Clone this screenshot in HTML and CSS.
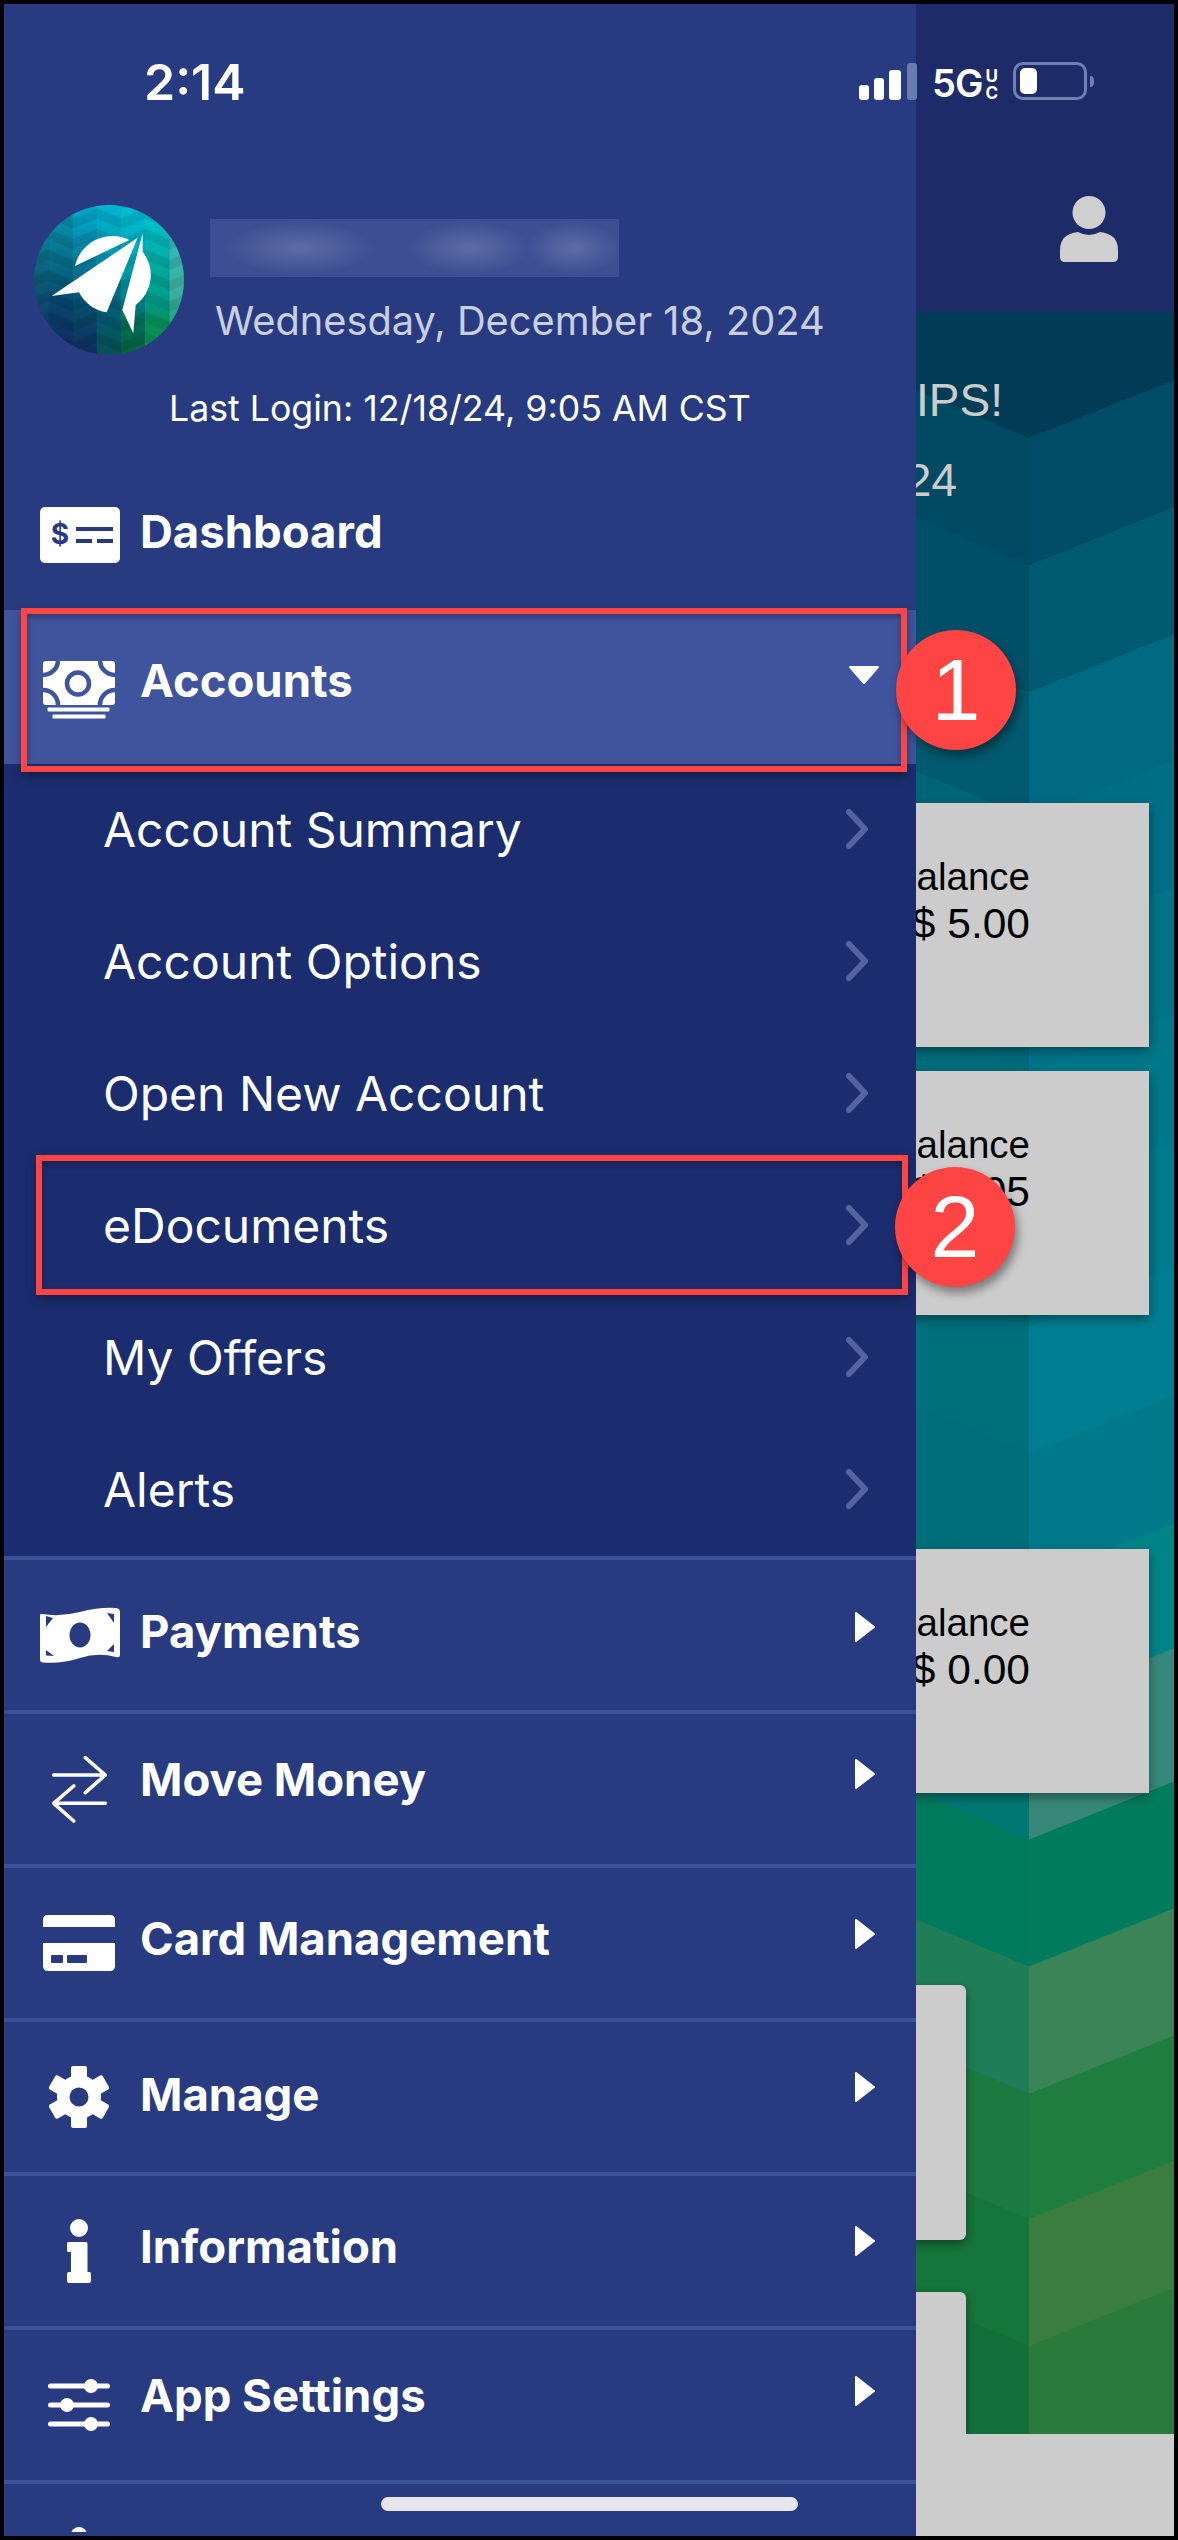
FILE: index.html
```html
<!DOCTYPE html>
<html lang="en">
<head>
<meta charset="utf-8">
<title>Accounts menu</title>
<link rel="stylesheet" href="styles.css">
</head>
<body>
<svg class="defs" width="0" height="0" aria-hidden="true">
  <symbol id="chev" viewBox="0 0 24 42"><polyline points="4,4 20,21 4,38" fill="none" stroke="#53649f" stroke-width="6" stroke-linecap="round" stroke-linejoin="round"/></symbol>
  <symbol id="tri" viewBox="0 0 20 30"><polygon points="1,1 19,15 1,29" fill="#fff" stroke="#fff" stroke-width="2" stroke-linejoin="round"/></symbol>
</svg>
<div class="phone">

  <div class="main">
    <header class="topbar">
      <svg class="user" viewBox="0 0 58 66"><ellipse cx="29" cy="16.500" rx="16.500" ry="16.500" fill="#cfcfcf"/><path d="M18 36 Q29 42 40 36 Q58 38 58 54 V61 Q58 66 53 66 H5 Q0 66 0 61 V54 Q0 38 18 36Z" fill="#cfcfcf"/></svg>
    </header>
    <section class="content">
      <svg class="bands" viewBox="4 312 1170 2120" preserveAspectRatio="none">
        <rect x="4" y="312" width="1170" height="2120" fill="#013c56"/>
        <g>
          <polygon fill="#004a64" points="900,384 1029,438 1029,2540 900,2540"/>
          <polygon fill="#004f69" points="900,511 1029,565 1029,2540 900,2540"/>
          <polygon fill="#005a70" points="900,638 1029,692 1029,2540 900,2540"/>
          <polygon fill="#006478" points="900,764 1029,818 1029,2540 900,2540"/>
          <polygon fill="#006a7a" points="900,891 1029,945 1029,2540 900,2540"/>
          <polygon fill="#006c7a" points="900,1018 1029,1072 1029,2540 900,2540"/>
          <polygon fill="#006e7b" points="900,1144 1029,1198 1029,2540 900,2540"/>
          <polygon fill="#00707d" points="900,1271 1029,1325 1029,2540 900,2540"/>
          <polygon fill="#006f7b" points="900,1398 1029,1452 1029,2540 900,2540"/>
          <polygon fill="#006f78" points="900,1524 1029,1578 1029,2540 900,2540"/>
          <polygon fill="#007872" points="900,1651 1029,1705 1029,2540 900,2540"/>
          <polygon fill="#007a5c" points="900,1784 1029,1838 1029,2540 900,2540"/>
          <polygon fill="#1f7d58" points="900,1911 1029,1965 1029,2540 900,2540"/>
          <polygon fill="#1c7a40" points="900,2038 1029,2092 1029,2540 900,2540"/>
          <polygon fill="#15753a" points="900,2163 1029,2217 1029,2540 900,2540"/>
          <polygon fill="#14703a" points="900,2290 1029,2344 1029,2540 900,2540"/>
        </g>
        <g>
          <polygon fill="#004b65" points="1029,438 1174,380 1174,2540 1029,2540"/>
          <polygon fill="#005a72" points="1029,565 1174,507 1174,2540 1029,2540"/>
          <polygon fill="#006a82" points="1029,692 1174,634 1174,2540 1029,2540"/>
          <polygon fill="#006f86" points="1029,818 1174,760 1174,2540 1029,2540"/>
          <polygon fill="#007388" points="1029,945 1174,887 1174,2540 1029,2540"/>
          <polygon fill="#00778a" points="1029,1072 1174,1014 1174,2540 1029,2540"/>
          <polygon fill="#007a8d" points="1029,1198 1174,1140 1174,2540 1029,2540"/>
          <polygon fill="#007e91" points="1029,1325 1174,1267 1174,2540 1029,2540"/>
          <polygon fill="#007a8a" points="1029,1452 1174,1394 1174,2540 1029,2540"/>
          <polygon fill="#008487" points="1029,1580 1174,1522 1174,2540 1029,2540"/>
          <polygon fill="#37887a" points="1029,1705 1174,1647 1174,2540 1029,2540"/>
          <polygon fill="#007c5c" points="1029,1838 1174,1780 1174,2540 1029,2540"/>
          <polygon fill="#3a8458" points="1029,1965 1174,1907 1174,2540 1029,2540"/>
          <polygon fill="#1f7d3f" points="1029,2092 1174,2034 1174,2540 1029,2540"/>
          <polygon fill="#3a7d3e" points="1029,2217 1174,2159 1174,2540 1029,2540"/>
          <polygon fill="#2a7a3c" points="1029,2344 1174,2286 1174,2540 1029,2540"/>
        </g>
      </svg>
      <div class="banner">
        <div class="banner-title">TIPS!</div>
        <div class="banner-date">2024</div>
      </div>
      <div class="card card-first"><div>Balance</div><div class="amount">$ 5.00</div></div>
      <div class="card card-second"><div>Balance</div><div class="amount">$ 0.05</div></div>
      <div class="card card-third"><div>Balance</div><div class="amount">$ 0.00</div></div>
      <div class="tile tile-first"></div>
      <div class="tile tile-second"></div>
    </section>
    <footer class="footer"></footer>
  </div>

  <aside class="drawer">
    <div class="profile">
      <div class="profile-row">
        <svg class="logo" viewBox="0 0 450 450">
          <defs>
            <clipPath id="logoClip"><circle cx="225" cy="225" r="225"/></clipPath>
            <linearGradient id="lc0" x1="0" y1="0" x2="0" y2="1"><stop offset="0.2" stop-color="#0a7d92"/><stop offset="0.5" stop-color="#0a5a76"/><stop offset="0.8" stop-color="#0c3f6a"/></linearGradient>
            <linearGradient id="lc1" x1="0" y1="0" x2="0" y2="1"><stop offset="0.1" stop-color="#0a8ea8"/><stop offset="0.4" stop-color="#066a86"/><stop offset="0.65" stop-color="#06466e"/><stop offset="0.9" stop-color="#0f2f60"/></linearGradient>
            <linearGradient id="lc2" x1="0" y1="0" x2="0" y2="1"><stop offset="0.05" stop-color="#02a6cb"/><stop offset="0.35" stop-color="#077f9c"/><stop offset="0.65" stop-color="#06506f"/><stop offset="1" stop-color="#0f2c5e"/></linearGradient>
            <linearGradient id="lc3" x1="0" y1="0" x2="0" y2="1"><stop offset="0" stop-color="#00b6d4"/><stop offset="0.35" stop-color="#0295ae"/><stop offset="0.65" stop-color="#045f7a"/><stop offset="1" stop-color="#064f55"/></linearGradient>
            <linearGradient id="lc4" x1="0" y1="0" x2="0" y2="1"><stop offset="0" stop-color="#00bdd6"/><stop offset="0.35" stop-color="#00a7b5"/><stop offset="0.62" stop-color="#067f8e"/><stop offset="0.8" stop-color="#056b55"/><stop offset="1" stop-color="#05633f"/></linearGradient>
            <linearGradient id="lc5" x1="0" y1="0" x2="0" y2="1"><stop offset="0.1" stop-color="#00c0cc"/><stop offset="0.4" stop-color="#00ab9f"/><stop offset="0.65" stop-color="#009a88"/><stop offset="0.8" stop-color="#078f55"/></linearGradient>
            <linearGradient id="lc6" x1="0" y1="0" x2="0" y2="1"><stop offset="0.25" stop-color="#30b8b8"/><stop offset="0.55" stop-color="#3cb3a0"/><stop offset="0.8" stop-color="#1ca482"/></linearGradient>
            <pattern id="logoChev" x="43" y="10" width="146" height="62" patternUnits="userSpaceOnUse">
              <polygon points="0,0 73,30 146,0 146,31 73,61 0,31" fill="#000" fill-opacity="0.09"/>
            </pattern>
          </defs>
          <g clip-path="url(#logoClip)">
            <rect x="0" width="44" height="450" fill="url(#lc0)"/>
            <rect x="43" width="74" height="450" fill="url(#lc1)"/>
            <rect x="116" width="73" height="450" fill="url(#lc2)"/>
            <rect x="188" width="73" height="450" fill="url(#lc3)"/>
            <rect x="260" width="74" height="450" fill="url(#lc4)"/>
            <rect x="333" width="74" height="450" fill="url(#lc5)"/>
            <rect x="406" width="44" height="450" fill="url(#lc6)"/>
            <rect width="450" height="450" fill="url(#logoChev)"/>
            <path d="M123 183 A115 115 0 0 1 286 105 Z" fill="#fff"/>
            <path d="M311 98 L53 273 L135 262 A112 112 0 0 0 218 322 Z" fill="#fff"/>
            <path d="M326 85 L265 315 L298 385 L305 300 A112 112 0 0 0 326 140 Z" fill="#fff"/>
          </g>
        </svg>
        <div class="profile-text">
          <div class="blurred-name"></div>
          <div class="date">Wednesday, December 18, 2024</div>
        </div>
      </div>
      <div class="last-login">Last Login: 12/18/24, 9:05 AM CST</div>
    </div>

    <nav class="menu">
      <div class="row row-plain">
        <div class="icon-col">
          <svg class="ico ico-wide" width="80" height="56" viewBox="0 0 80 56">
            <rect width="80" height="56" rx="5" fill="#fff"/>
            <text x="20" y="37" text-anchor="middle" class="ico-dollar">$</text>
            <rect x="36" y="20" width="37" height="4" fill="#283b80"/>
            <rect x="36" y="32" width="16" height="4" fill="#283b80"/>
            <rect x="57" y="32" width="16" height="4" fill="#283b80"/>
          </svg>
        </div>
        <div class="row-main lift-2"><span class="label">Dashboard</span></div>
      </div>

      <div class="row row-open">
        <div class="icon-col icon-low">
          <svg class="ico" width="72" height="58" viewBox="0 0 72 58">
            <rect width="72" height="44" rx="3" fill="#fff"/>
            <g fill="none" stroke="#3f549c" stroke-width="4.500">
              <circle cx="35" cy="22.500" r="11"/>
              <path d="M0 14 A15 15 0 0 0 15 0"/>
              <path d="M72 14 A15 15 0 0 1 57 0"/>
              <path d="M0 29 A15 15 0 0 1 15 44"/>
              <path d="M72 29 A15 15 0 0 0 57 44"/>
            </g>
            <rect x="4.500" y="46.500" width="62" height="4" rx="1" fill="#fff"/>
            <rect x="9.500" y="53.500" width="53" height="4" rx="1" fill="#fff"/>
          </svg>
        </div>
        <div class="row-main lift-7">
          <span class="label nudge-4">Accounts</span>
          <svg class="arrow-down" width="32" height="20" viewBox="0 0 32 20"><polygon points="2,2 30,2 16,18" fill="#fff" stroke="#fff" stroke-width="2" stroke-linejoin="round"/></svg>
        </div>
      </div>

      <div class="submenu">
        <div class="sub-row"><span>Account Summary</span><svg class="chev"><use href="#chev"/></svg></div>
        <div class="sub-row"><span>Account Options</span><svg class="chev"><use href="#chev"/></svg></div>
        <div class="sub-row"><span>Open New Account</span><svg class="chev"><use href="#chev"/></svg></div>
        <div class="sub-row"><span>eDocuments</span><svg class="chev"><use href="#chev"/></svg></div>
        <div class="sub-row"><span>My Offers</span><svg class="chev"><use href="#chev"/></svg></div>
        <div class="sub-row"><span>Alerts</span><svg class="chev"><use href="#chev"/></svg></div>
      </div>

      <div class="row row-line">
        <div class="icon-col">
          <svg class="ico ico-wide" width="80" height="56" viewBox="0 0 80 56">
            <path d="M2 7 Q20 10 40 5 T75 1 Q80 1 80 5 V48 Q80 51 76 50 Q58 45 40 51 T3 55.500 Q0 55.500 0 52 V9 Q0 6 2 7Z" fill="#fff"/>
            <ellipse cx="40" cy="28" rx="10.500" ry="12.500" fill="#283b80"/>
            <polygon points="6,9 13,11 6,20" fill="#283b80"/>
            <polygon points="67,6 74,7 74,16" fill="#283b80"/>
            <polygon points="6,43 14,49 6,48.500" fill="#283b80"/>
            <polygon points="74,37 74,45 67,44" fill="#283b80"/>
          </svg>
        </div>
        <div class="row-main lift-2"><span class="label">Payments</span><svg class="tri"><use href="#tri"/></svg></div>
      </div>

      <div class="row row-line">
        <div class="icon-col">
          <svg class="ico" width="55" height="67" viewBox="0 0 55 67">
            <path d="M1.700 19 H53.300 M33.300 1.700 L53.300 19 L33.300 36.700 M1.700 47.300 H53.300 M21.700 30 L1.700 47.300 L21.700 65" fill="none" stroke="#fff" stroke-width="3.600" stroke-linecap="round" stroke-linejoin="round"/>
          </svg>
        </div>
        <div class="row-main lift-9"><span class="label nudge-3">Move Money</span><svg class="tri"><use href="#tri"/></svg></div>
      </div>

      <div class="row row-line">
        <div class="icon-col">
          <svg class="ico" width="72" height="56" viewBox="0 0 72 56">
            <path d="M0 12 V5 Q0 0 5 0 H67 Q72 0 72 5 V12Z" fill="#fff"/>
            <path d="M0 28 H72 V51 Q72 56 67 56 H5 Q0 56 0 51Z" fill="#fff"/>
            <rect x="8" y="40" width="12" height="8" rx="1" fill="#283b80"/>
            <rect x="24" y="40" width="20" height="8" rx="1" fill="#283b80"/>
          </svg>
        </div>
        <div class="row-main lift-3"><span class="label">Card Management</span><svg class="tri"><use href="#tri"/></svg></div>
      </div>

      <div class="row row-line">
        <div class="icon-col">
          <svg class="ico" width="60" height="62" viewBox="0 0 60 62">
            <g fill="#fff">
              <circle cx="30" cy="31" r="22"/>
              <rect x="22" y="0" width="16" height="62" rx="2"/>
              <rect x="22" y="0" width="16" height="62" rx="2" transform="rotate(60 30 31)"/>
              <rect x="22" y="0" width="16" height="62" rx="2" transform="rotate(120 30 31)"/>
            </g>
            <circle cx="30" cy="31" r="9.500" fill="#283b80"/>
          </svg>
        </div>
        <div class="row-main lift-4"><span class="label nudge-6">Manage</span><svg class="tri"><use href="#tri"/></svg></div>
      </div>

      <div class="row row-line">
        <div class="icon-col">
          <svg class="ico" width="24" height="64" viewBox="0 0 24 64">
            <circle cx="12" cy="9" r="9" fill="#fff"/>
            <path d="M1.500 23 H19 Q20.500 23 20.500 24.500 V53 H22.500 Q24 53 24 54.500 V62 Q24 64 22 64 H2 Q0 64 0 62 V55 Q0 53 2 53 H4 V33 H1.500 Q0 33 0 31.500 V24.500 Q0 23 1.500 23Z" fill="#fff"/>
          </svg>
        </div>
        <div class="row-main lift-4"><span class="label nudge-3">Information</span><svg class="tri"><use href="#tri"/></svg></div>
      </div>

      <div class="row row-line">
        <div class="icon-col">
          <svg class="ico" width="62" height="52" viewBox="0 0 62 52">
            <g stroke="#fff" stroke-width="5" stroke-linecap="round"><path d="M2.500 7 H59.500 M2.500 26 H59.500 M2.500 45 H59.500"/></g>
            <g fill="#fff"><circle cx="43" cy="7" r="7"/><circle cx="19" cy="26" r="7"/><circle cx="43" cy="45" r="7"/></g>
          </svg>
        </div>
        <div class="row-main lift-8"><span class="label">App Settings</span><svg class="tri"><use href="#tri"/></svg></div>
      </div>

      <div class="row-partial">
        <div class="icon-col">
          <svg class="ico" width="62" height="30" viewBox="0 0 62 30"><g fill="#fff"><circle cx="31" cy="8" r="8"/><circle cx="8" cy="12" r="5"/><circle cx="52" cy="12" r="5"/></g></svg>
        </div>
      </div>
    </nav>
  </aside>

  <div class="status">
    <span class="time">2:14</span>
    <div class="status-right">
      <div class="signal">
        <i class="bar bar-1"></i><i class="bar bar-2"></i><i class="bar bar-3"></i><i class="bar bar-4"></i>
      </div>
      <span class="net">5G</span>
      <span class="net-uc"><b>U</b><b>C</b></span>
      <div class="battery"><i class="battery-fill"></i></div>
      <i class="battery-nub"></i>
    </div>
  </div>

  <div class="callout callout-one"></div>
  <div class="callout callout-two"></div>
  <div class="badge badge-one">1</div>
  <div class="badge badge-two">2</div>
  <div class="home-bar"></div>
</div>
</body>
</html>
```
FILE: styles.css
```css
* { box-sizing: border-box; }
html, body { margin: 0; padding: 0; background: #000; }
body { width: 1178px; height: 2540px; overflow: hidden; padding: 4px; font-family: Inter, "Liberation Sans", sans-serif; }
.defs { position: absolute; }
.phone { position: relative; width: 1170px; height: 2532px; overflow: hidden; }

/* screen behind the drawer */
.main { display: flex; flex-direction: column; height: 100%; }
.topbar { height: 308px; flex: none; display: flex; justify-content: flex-end; padding: 192px 56px 0 0; background: #1e2b69; }
.user { width: 58px; height: 66px; }
.content { position: relative; flex: 1; overflow: hidden; }
.bands { position: absolute; left: 0; top: 0; width: 100%; height: 100%; }
.banner { position: relative; padding-top: 60px; text-align: right; font-family: "Liberation Sans", Arial, sans-serif; font-size: 46px; line-height: 56px; color: #cccccc; }
.banner-title { padding-right: 171px; }
.banner-date { margin-top: 24px; padding-right: 217px; }
.card { position: relative; margin-left: 300px; margin-right: 25px; height: 244px; padding: 50px 119px 0 0; background: #cccccc; color: #000; text-align: right; font-family: "Liberation Sans", Arial, sans-serif; font-size: 38.500px; line-height: 47px; box-shadow: 0 4px 10px rgba(0, 0, 0, 0.4); }
.amount { font-size: 42.500px; }
.card-first { margin-top: 295px; }
.card-second { margin-top: 24px; }
.card-third { margin-top: 234px; }
.tile { position: relative; margin-left: 300px; width: 662px; background: #cccccc; border-radius: 6px; box-shadow: 0 4px 10px rgba(0, 0, 0, 0.4); }
.tile-first { margin-top: 192px; height: 255px; }
.tile-second { margin-top: 52px; height: 200px; border-radius: 6px 6px 0 0; }
.footer { height: 102px; flex: none; background: #cccccc; position: relative; }

/* drawer */
.drawer { position: absolute; left: 0; top: 0; width: 912px; height: 100%; overflow: hidden; background: #283b80; color: #fff; }
.profile { height: 456px; padding: 201px 0 0 30px; }
.profile-row { display: flex; height: 150px; }
.logo { width: 150px; height: 150px; flex: none; }
.profile-text { margin-left: 26px; padding-top: 14px; }
.blurred-name { width: 409px; height: 58px; background:
  radial-gradient(ellipse 75px 26px at 90px 29px, #5a6aa5 10%, rgba(90, 106, 165, 0) 100%),
  radial-gradient(ellipse 60px 26px at 259px 29px, #5a6aa5 10%, rgba(90, 106, 165, 0) 100%),
  radial-gradient(ellipse 48px 26px at 364px 29px, #5a6aa5 10%, rgba(90, 106, 165, 0) 100%),
  #3d4f92; }
.date { margin-top: 21px; padding-left: 5px; font-size: 39.800px; line-height: 46px; color: #c8cfe3; white-space: nowrap; }
.last-login { margin-top: 33px; padding-left: 135px; font-size: 35.700px; line-height: 40px; white-space: nowrap; }

.row { display: flex; align-items: center; }
.row-plain { height: 150px; }
.row-open { height: 154px; background: #3f549c; }
.row-line { height: 154px; border-top: 4px solid #3c5097; }
.row-partial { height: 52px; border-top: 4px solid #3c5097; padding-top: 43px; overflow: hidden; }
.icon-col { width: 136px; flex: none; padding-left: 14px; display: flex; justify-content: center; }
.icon-low { margin-top: 6px; }
.ico { display: block; flex: none; }
.ico-wide { margin-left: 2px; }
.ico-dollar { font-family: Inter, sans-serif; font-size: 28px; font-weight: 700; fill: #283b80; }
.row-main { flex: 1; display: flex; align-items: center; justify-content: space-between; padding-right: 41px; }
.lift-2 { padding-bottom: 7px; }
.lift-3 { padding-bottom: 9px; }
.lift-4 { padding-bottom: 11px; }
.lift-7 { padding-bottom: 17px; padding-right: 36px; }
.lift-8 { padding-bottom: 19px; }
.lift-9 { padding-bottom: 21px; }
.label { font-size: 45.500px; font-weight: 700; line-height: 52px; white-space: nowrap; }
.nudge-3 { margin-top: 3px; }
.nudge-4 { margin-top: 4px; }
.nudge-6 { margin-top: 6px; }
.tri { width: 20px; height: 30px; margin-bottom: 9px; flex: none; }
.arrow-down { margin-bottom: 7px; flex: none; }

.submenu { background: #1b2d6e; }
.sub-row { height: 132px; display: flex; align-items: center; justify-content: space-between; padding: 0 47px 0 99px; font-size: 48px; line-height: 56px; }
.chev { width: 24px; height: 42px; flex: none; margin-bottom: 2px; }

/* status bar */
.status { position: absolute; left: 0; top: 0; width: 100%; display: flex; justify-content: space-between; padding: 52px 0 0 140px; color: #fff; }
.time { font-size: 50px; font-weight: 600; line-height: 52px; }
.status-right { display: flex; align-items: flex-end; height: 42px; margin-top: 6px; padding-right: 80px; }
.signal { display: flex; align-items: flex-end; gap: 5px; height: 37px; margin-bottom: 4px; }
.bar { display: block; width: 10px; background: #fff; border-radius: 3px; }
.bar-1 { height: 15px; }
.bar-2 { height: 22px; }
.bar-3 { height: 30px; width: 12px; }
.bar-4 { height: 37px; margin-left: 1px; background: #6a7bb0; }
.net { margin-left: 15px; font-size: 38px; font-weight: 600; line-height: 42px; letter-spacing: -1px; }
.net-uc { display: flex; flex-direction: column; margin-left: 3px; font-size: 17px; line-height: 17px; margin-bottom: 2px; }
.net-uc b { font-weight: 700; }
.battery { position: relative; width: 74px; height: 38px; margin-left: 15px; margin-bottom: 4px; border: 3px solid #6f7fb0; border-radius: 10px; padding: 3px 0 0 4px; }
.battery-fill { display: block; width: 17px; height: 26px; background: #fff; border-radius: 5px; }
.battery-nub { display: block; width: 4px; height: 11px; margin: 0 0 17px 3px; background: #6f7fb0; border-radius: 0 4px 4px 0; }

/* annotations */
.callout { position: absolute; border: 6px solid #ff4444; box-shadow: 0 4px 8px rgba(0, 0, 0, 0.35), inset 0 3px 6px rgba(0, 0, 0, 0.3); }
.callout-one { left: 17px; top: 604px; width: 886px; height: 164px; }
.callout-two { left: 32px; top: 1151px; width: 872px; height: 140px; }
.badge { position: absolute; width: 120px; height: 120px; border-radius: 50%; background: #ff4444; color: #fff; font-family: "Liberation Sans", Arial, sans-serif; font-size: 88px; line-height: 120px; text-align: center; box-shadow: 3px 6px 10px rgba(0, 0, 0, 0.4); }
.badge-one { left: 892px; top: 626px; }
.badge-two { left: 891px; top: 1163px; }
.home-bar { position: absolute; left: 377px; top: 2493px; width: 417px; height: 14px; border-radius: 7px; background: #e6e6ec; }
```
